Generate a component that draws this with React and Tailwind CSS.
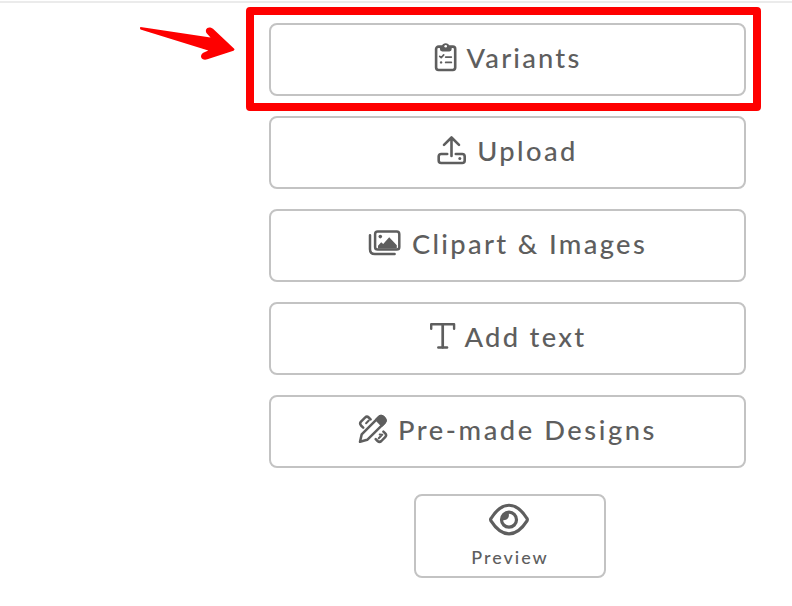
function VariantsIcon() {
  return (
    <svg width="24" height="30" viewBox="0 0 24 30" fill="none" stroke="currentColor" strokeWidth="2.1" strokeLinecap="round" strokeLinejoin="round">
      <rect x="2.1" y="4.6" width="19.1" height="23.4" rx="2.4" strokeWidth="2.6" />
      <path d="M5.9 4H7.9A3.9 3.9 0 0 1 15.4 4H17.7V7.1Q17.7 9.4 15.4 9.4H8.2Q5.9 9.4 5.9 7.1Z" fill="currentColor" stroke="none" />
      <circle cx="11.7" cy="4.3" r="1.3" fill="#fff" stroke="none" />
      <path d="M5.7 14.3L7.2 15.7L9.7 12.9" strokeWidth="1.7" />
      <path d="M11.7 15.1H17.3M11.7 20.4H17.3" strokeWidth="1.8" />
      <circle cx="7.1" cy="20.4" r="1.2" fill="currentColor" stroke="none" />
    </svg>
  );
}

function UploadIcon() {
  return (
    <svg width="30" height="30" viewBox="0 0 30 30" fill="none" stroke="currentColor" strokeWidth="2.6" strokeLinecap="round" strokeLinejoin="round">
      <path d="M14.5 21V2.8M7 9.9L14.5 2.5L22 9.9" />
      <path d="M10.2 19H4.2Q1.7 19 1.7 21.5V25.5Q1.7 28 4.2 28H25.2Q27.7 28 27.7 25.5V21.5Q27.7 19 25.2 19H18.8" />
      <circle cx="22.8" cy="23.5" r="1.5" fill="currentColor" stroke="none" />
    </svg>
  );
}

function ImagesIcon() {
  return (
    <svg width="34" height="26" viewBox="0 0 34 26" fill="none" stroke="currentColor" strokeWidth="2.5" strokeLinecap="round" strokeLinejoin="round">
      <rect x="7.1" y="1.6" width="24.2" height="18" rx="2.6" />
      <path d="M2 5.2V19.3Q2 24.1 6.8 24.1H26.6" />
      <circle cx="12.3" cy="6.6" r="1.8" fill="currentColor" stroke="none" />
      <path d="M10 18.6V15.7L13.2 12.3L15.2 14L21.2 7.2L28.8 15.3V18.6Z" fill="currentColor" stroke="none" />
    </svg>
  );
}

function TextIcon() {
  return (
    <svg width="27" height="28" viewBox="0 0 27 28" fill="none" stroke="currentColor" strokeWidth="2.4" strokeLinecap="round" strokeLinejoin="round">
      <path d="M2.2 6.8V2.3H25.1V6.8" />
      <path d="M13.7 2.3V25.3" strokeWidth="2.7" />
      <path d="M9.3 25.5H18.1" />
    </svg>
  );
}

function DesignsIcon() {
  return (
    <svg width="30" height="30" viewBox="0 0 30 30" fill="none" stroke="currentColor" strokeWidth="2.5" strokeLinecap="round" strokeLinejoin="round">
      <path d="M2 27.8L3.7 20.4L20.9 3.2Q23.3 .9 26 3.6Q28.8 6.4 26.4 8.8L9.2 25.8Z" />
      <path d="M18.4 5.7L20.9 3.2Q23.3 .9 26 3.6Q28.8 6.4 26.4 8.8L23.9 11.3Z" fill="currentColor" />
      <path d="M5.2 13.6L3 11.5Q1.3 9.6 3 7.7L7 3.6Q8.9 1.8 10.7 3.5L12.6 5.3" />
      <path d="M8.1 9.2L10.8 6.5" strokeWidth="2" />
      <path d="M25.4 17.6L27.2 19.4Q29 21.2 27.2 23.1L23.4 27Q21.5 28.8 19.6 27L17.7 25.1" />
      <path d="M21.7 20.5L24.3 20.7M20.7 24.2L23.2 21.7" strokeWidth="2" />
    </svg>
  );
}

function EyeIcon() {
  return (
    <svg width="42" height="34" viewBox="1 0 42 34" fill="none" stroke="currentColor" strokeWidth="3.2" strokeLinejoin="round">
      <path d="M2.7 17Q2.3 16.4 3 15.5C14-2.2 28-2.2 39 15.5Q39.7 16.4 39 17.9C28 35.2 14 35.2 3 17.9Z" />
      <circle cx="21" cy="16.7" r="7.5" />
      <path d="M14 17C17.8 18 21.7 15.6 20.8 10.5L20 8.8L15 11Z" fill="currentColor" stroke="none" />
    </svg>
  );
}

const actions = [
  { label: "Variants", Icon: VariantsIcon, spacing: "gap-[9px] tracking-[2.2px]" },
  { label: "Upload", Icon: UploadIcon, spacing: "gap-[10px] tracking-[2.4px]" },
  { label: "Clipart & Images", Icon: ImagesIcon, spacing: "gap-[10px] tracking-[2.35px]" },
  { label: "Add text", Icon: TextIcon, spacing: "gap-[9px] tracking-[2.3px]" },
  { label: "Pre-made Designs", Icon: DesignsIcon, spacing: "gap-[10px] tracking-[2.55px]" },
];

export default function App() {
  return (
    <main className="relative h-[606px] w-[792px] overflow-hidden bg-white pt-px font-['Lato',sans-serif] text-[#5e5e5e]">
      <div className="h-[2px] bg-[#ebebeb]" />

      <div className="ml-[269px] mt-5 flex w-[477px] flex-col gap-5">
        {actions.map(({ label, Icon, spacing }) => (
          <button
            key={label}
            className={`flex h-[73px] items-center justify-center rounded-lg border-2 border-[#c3c3c3] pb-[5px] text-[27.3px] font-medium leading-none whitespace-nowrap ${spacing}`}
          >
            <Icon />
            <span className="pt-[2px]">{label}</span>
          </button>
        ))}
      </div>

      <button className="ml-[414px] mt-[26px] flex h-[84px] w-[192px] flex-col items-center rounded-lg border-2 border-[#c3c3c3] pt-[7px] text-[18px] font-medium leading-none tracking-[2px]">
        <EyeIcon />
        <span className="mt-[11px]">Preview</span>
      </button>

      {/* highlight around the first action */}
      <div className="pointer-events-none absolute left-[246px] top-[7px] h-[104px] w-[515px] rounded-[4px] border-8 border-[#fe0000]" />
      <svg className="pointer-events-none absolute left-[138px] top-[24px]" width="100" height="40" viewBox="0 0 100 40" fill="#fe0000">
        <path d="M2.5 3L72.5 13.5L69.1 9.7C65.7 5.8 70 1 75 4.8L96.2 24.8Q97.2 25.8 95.5 26.7L69.3 35.3C64 37.3 60.5 32 65.3 28.8L70.3 26.6L2.5 5.4Q1.2 4 2.5 3Z" />
      </svg>
    </main>
  );
}
